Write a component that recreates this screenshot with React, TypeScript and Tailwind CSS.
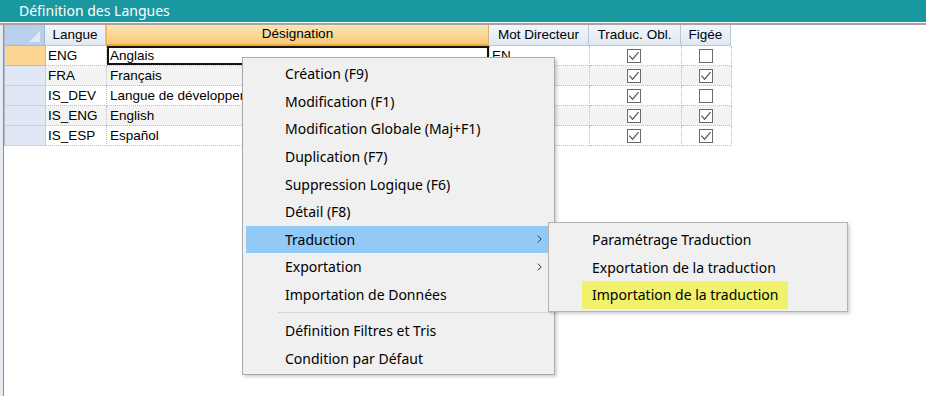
import React from "react";
import { clsx } from "clsx";

type Row = { code: string; name: string; mot: string; oblig: boolean; figee: boolean };

const ROWS: Row[] = [
  { code: "ENG", name: "Anglais", mot: "EN", oblig: true, figee: false },
  { code: "FRA", name: "Français", mot: "FR", oblig: true, figee: true },
  { code: "IS_DEV", name: "Langue de développement", mot: "", oblig: true, figee: false },
  { code: "IS_ENG", name: "English", mot: "", oblig: true, figee: true },
  { code: "IS_ESP", name: "Español", mot: "", oblig: true, figee: true },
];

type MenuEntry = { label: string; sub?: boolean; active?: boolean } | "sep";

const MENU: MenuEntry[] = [
  { label: "Création (F9)" },
  { label: "Modification (F1)" },
  { label: "Modification Globale (Maj+F1)" },
  { label: "Duplication (F7)" },
  { label: "Suppression Logique (F6)" },
  { label: "Détail (F8)" },
  { label: "Traduction", sub: true, active: true },
  { label: "Exportation", sub: true },
  { label: "Importation de Données" },
  "sep",
  { label: "Définition Filtres et Tris" },
  { label: "Condition par Défaut" },
];

const SUBMENU = ["Paramétrage Traduction", "Exportation de la traduction", "Importation de la traduction"];

function Check({ on }: { on: boolean }) {
  return (
    <span className="flex h-[14px] w-[14px] items-center justify-center border border-[#6a6a6a] bg-white">
      {on && (
        <svg width="12" height="12" viewBox="0 0 12 12">
          <path d="M1.3 5.6 L4.6 9.2 L10.6 2.2" fill="none" stroke="#5f5f5f" strokeWidth="1.3" />
        </svg>
      )}
    </span>
  );
}

function HeaderCell({ w, children, selected }: { w: string; children?: React.ReactNode; selected?: boolean }) {
  return (
    <div
      className={clsx(
        "flex h-full shrink-0 items-center justify-center border-r",
        w,
        selected
          ? "border-l border-l-[#f2b458] border-r-[#d9b27a] border-b-2 border-b-[#f3a437] bg-gradient-to-b from-[#fce5b6] to-[#f7c977]"
          : "border-b border-r-[#b9c7d9] border-b-[#b9c7d9] bg-gradient-to-b from-[#f2f6fb] to-[#dfe8f2]"
      )}
    >
      {children}
    </div>
  );
}

export default function App() {
  return (
    <div className="relative h-[396px] w-[926px] overflow-hidden bg-white font-['Liberation_Sans',Arial,sans-serif] text-[13.5px] text-black">
      {/* Title bar */}
      <div className="h-[22px] bg-[#1a98a0] pl-[19px] font-['Noto_Sans',sans-serif] text-[14px] leading-[21px] text-white">
        Définition des Langues
      </div>
      <div className="h-px bg-white" />
      <div className="h-[2px] bg-[#a4a4a4]" />

      <div className="flex h-[371px]">
        <div className="w-[3px] bg-[#e6ebf1]" />
        <div className="w-px bg-[#8f8f8f]" />

        {/* Grid */}
        <div className="flex flex-col self-start border-l border-[#aebdd0]">
          <div className="flex h-[21px]">
            <div className="relative h-full w-[40px] shrink-0 border-r border-b border-[#9fb6d6] bg-[#b9d0ed]">
              <svg className="absolute right-[4px] bottom-[3px]" width="11" height="11" viewBox="0 0 11 11">
                <polygon points="11,0 11,11 0,11" fill="#e4ebf4" />
              </svg>
            </div>
            <HeaderCell w="w-[61px]">Langue</HeaderCell>
            <HeaderCell w="w-[383px]" selected>
              Désignation
            </HeaderCell>
            <HeaderCell w="w-[100px]">Mot Directeur</HeaderCell>
            <HeaderCell w="w-[92px]">Traduc. Obl.</HeaderCell>
            <HeaderCell w="w-[50px]">Figée</HeaderCell>
          </div>

          {ROWS.map((r, i) => (
            <div key={r.code} className={clsx("flex h-[20px]", i % 2 === 1 && "bg-[#f3f3f3]")}>
              <div
                className={clsx(
                  "w-[41px] shrink-0 border-r border-b",
                  i === 0 ? "border-[#e8b565] bg-[#fcd590]" : "border-[#c3d2e6] bg-[#dfe8f4]"
                )}
              />
              <div className="w-[61px] shrink-0 border-r border-b border-dotted border-[#bdbdbd] pl-[2px] leading-[19px]">
                {r.code}
              </div>
              <div
                className={clsx(
                  "w-[383px] shrink-0 overflow-hidden border-r border-b border-dotted border-[#bdbdbd] pl-[3px] leading-[19px] whitespace-nowrap",
                  i === 0 && "bg-white shadow-[inset_0_0_0_2px_#141414]"
                )}
              >
                {r.name}
              </div>
              <div className="w-[100px] shrink-0 border-r border-b border-dotted border-[#bdbdbd] pl-[2px] leading-[19px]">
                {r.mot}
              </div>
              <div className="flex w-[92px] shrink-0 items-center justify-center border-r border-b border-dotted border-[#bdbdbd] pr-[3px]">
                <Check on={r.oblig} />
              </div>
              <div className="flex w-[50px] shrink-0 items-center justify-center border-r border-b border-dotted border-[#bdbdbd] pr-[1px]">
                <Check on={r.figee} />
              </div>
            </div>
          ))}
        </div>
      </div>

      {/* Context menu */}
      <div className="absolute left-[242px] top-[57px] w-[313px] border border-[#a9a9a9] bg-[#f0f0f0] py-[2px] font-['Noto_Sans',sans-serif] text-[14px] shadow-[2px_2px_3px_rgba(0,0,0,0.18)]">
        {MENU.map((m, i) =>
          m === "sep" ? (
            <div key={i} className="flex h-[8.6px] items-center pl-[35px] pr-[2px]">
              <div className="h-px w-full bg-[#d4d4d4]" />
            </div>
          ) : (
            <div
              key={i}
              className={clsx(
                "mx-[3px] flex h-[27.6px] items-center justify-between pl-[39px] pr-[9px]",
                m.active && "bg-[#91c9f7]"
              )}
            >
              <span>{m.label}</span>
              {m.sub && (
                <svg width="5" height="8" viewBox="0 0 5 8">
                  <path d="M0.8 0.6 L4.2 4 L0.8 7.4" fill="none" stroke="#333" strokeWidth="1" />
                </svg>
              )}
            </div>
          )
        )}
      </div>

      {/* Submenu */}
      <div className="absolute left-[548px] top-[222px] w-[300px] border border-[#b4b4b4] bg-[#f0f0f0] pt-[3px] pb-[2px] font-['Noto_Sans',sans-serif] text-[14px] shadow-[2px_2px_3px_rgba(0,0,0,0.18)]">
        {SUBMENU.map((s, i) => (
          <div key={s} className="flex h-[27.6px] items-stretch pl-[33px]">
            <span className={clsx("flex items-center px-[10px]", i === 2 && "bg-[#f0f26b]")}>{s}</span>
          </div>
        ))}
      </div>
    </div>
  );
}
